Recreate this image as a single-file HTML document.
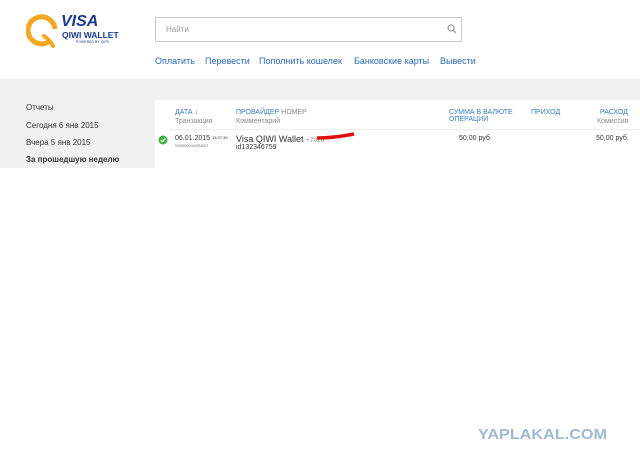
<!DOCTYPE html>
<html><head><meta charset="utf-8">
<style>
*{margin:0;padding:0;box-sizing:border-box}
body{width:640px;height:466px;background:#fff;font-family:"Liberation Sans",sans-serif;position:relative;overflow:hidden;color:#333}
.abs{position:absolute;white-space:nowrap}
.nav{color:#2a6ab4;font-size:9px;top:56px}
.gray{position:absolute;left:0;top:79px;width:640px;height:89px;background:#f2f1f1}
.box{position:absolute;left:155px;top:100px;width:485px;height:68px;background:#fff}
.side{font-size:8px;color:#333;left:26px}
.hd{font-size:7px;color:#3a7cc4}
.sub{font-size:7px;color:#888}
</style></head><body>
<svg class="abs" style="left:26px;top:10px" width="36" height="38" viewBox="0 0 36 38">
<path d="M25 30 A13.5 13.5 0 1 1 29 19" fill="none" stroke="#f5a623" stroke-width="5"/>
<path d="M18 26 Q24 30 27 36" fill="none" stroke="#f5a623" stroke-width="4" stroke-linecap="round"/>
</svg>
<div class="abs" style="left:61px;top:13px;font-size:16px;font-weight:bold;font-style:italic;color:#1a3b8c">VISA</div>
<div class="abs" style="left:62px;top:30px;font-size:8.5px;font-weight:bold;color:#1a3b8c">QIWI WALLET</div>
<div class="abs" style="left:76px;top:40px;font-size:3.5px;color:#1a3b8c">POWERED BY QIPS</div>
<div class="abs" style="left:155px;top:17px;width:307px;height:25px;border:1px solid #c9c9c9;background:#fff"></div>
<div class="abs" style="left:166px;top:25px;font-size:8px;color:#999">Найти</div>
<svg class="abs" style="left:447px;top:24px" width="10" height="10" viewBox="0 0 10 10"><circle cx="4" cy="4" r="3" fill="none" stroke="#999" stroke-width="1.2"/><path d="M6.3 6.3L9 9" stroke="#999" stroke-width="1.2"/></svg>
<div class="abs nav" style="left:155px">Оплатить</div>
<div class="abs nav" style="left:205px">Перевести</div>
<div class="abs nav" style="left:259px">Пополнить кошелек</div>
<div class="abs nav" style="left:354px">Банковские карты</div>
<div class="abs nav" style="left:440px">Вывести</div>
<div class="gray"></div>
<div class="abs side" style="top:103px">Отчеты</div>
<div class="abs side" style="top:121px">Сегодня 6 янв 2015</div>
<div class="abs side" style="top:138px">Вчера 5 янв 2015</div>
<div class="abs side" style="top:155px;font-weight:bold">За прошедшую неделю</div>
<div class="box"></div>
<div class="abs" style="left:170px;top:129px;width:470px;height:1px;background:#eee"></div>
<div class="abs hd" style="left:175px;top:109px">ДАТА ↓</div>
<div class="abs sub" style="left:175px;top:118px">Транзакция</div>
<div class="abs hd" style="left:236px;top:109px">ПРОВАЙДЕР <span style="color:#888">НОМЕР</span></div>
<div class="abs sub" style="left:236px;top:118px">Комментарий</div>
<div class="abs hd" style="left:449px;top:109px;line-height:7px">СУММА В ВАЛЮТЕ<br>ОПЕРАЦИИ</div>
<div class="abs hd" style="left:531px;top:109px">ПРИХОД</div>
<div class="abs hd" style="left:600px;top:109px">РАСХОД</div>
<div class="abs sub" style="left:597px;top:118px">Комиссия</div>
<svg class="abs" style="left:158px;top:135px" width="10" height="10"><circle cx="5" cy="5" r="4.5" fill="#3fae3f"/><path d="M2.8 5.2L4.4 6.7L7.3 3.6" fill="none" stroke="#fff" stroke-width="1.3"/></svg>
<div class="abs" style="left:175px;top:135px;font-size:7px;color:#333">06.01.2015 <span style="font-size:4px;vertical-align:top">18:37:36</span></div>
<div class="abs" style="left:175px;top:144px;font-size:3.5px;color:#777">99999990046284602</div>
<div class="abs" style="left:236px;top:134px;font-size:9px;color:#333">Visa QIWI Wallet <span style="font-size:6.5px;color:#888">+7926</span></div>
<svg class="abs" style="left:316px;top:132px" width="40" height="10"><path d="M1 6 Q18 6 38 2" stroke="#e01010" stroke-width="3.5" fill="none"/></svg>
<div class="abs" style="left:236px;top:144px;font-size:7px;color:#333">id132346759</div>
<div class="abs" style="left:459px;top:135px;font-size:7px;color:#333">50,00 руб.</div>
<div class="abs" style="left:596px;top:135px;font-size:7px;color:#333">50,00 руб.</div>
<div class="abs" style="left:478px;top:426px;font-size:15px;font-weight:bold;color:#9fb9d3;transform:scaleX(1.08);transform-origin:left">YAPLAKAL.COM</div>
</body></html>
